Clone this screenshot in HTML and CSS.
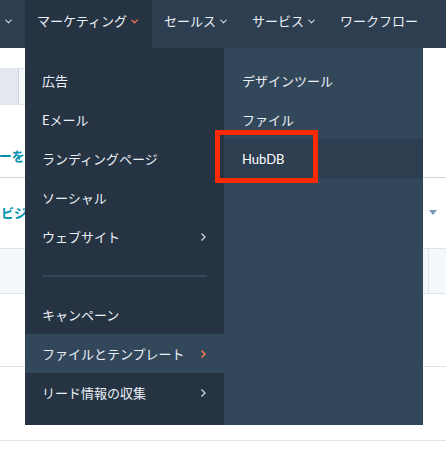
FILE: index.html
```html
<!DOCTYPE html>
<html lang="ja">
<head>
    <meta charset="UTF-8">
    <meta name="viewport" content="width=device-width, initial-scale=1.0">
    <title>マーケティング メニュー</title>
    <link rel="stylesheet" href="styles.css">
</head>
<body>
    <header class="topnav">
        <div class="nav-item nav-stub">
            <svg class="chev-down" viewBox="0 0 8 5"><polyline points="0.5,0.5 4,4 7.5,0.5"/></svg>
        </div>
        <div class="nav-item active">
            マーケティング
            <svg class="chev-down accent" viewBox="0 0 8 5"><polyline points="0.5,0.5 4,4 7.5,0.5"/></svg>
        </div>
        <div class="nav-item">
            セールス
            <svg class="chev-down" viewBox="0 0 8 5"><polyline points="0.5,0.5 4,4 7.5,0.5"/></svg>
        </div>
        <div class="nav-item">
            サービス
            <svg class="chev-down" viewBox="0 0 8 5"><polyline points="0.5,0.5 4,4 7.5,0.5"/></svg>
        </div>
        <div class="nav-item">ワークフロー</div>
    </header>

    <main class="page">
        <div class="tabbar">
            <div class="tab tab-selected"></div>
            <div class="tab"></div>
        </div>
        <div class="row row-filter">
            <span class="link link-filter">フィルターを追加</span>
        </div>
        <div class="row row-views">
            <span class="link link-views">ビジネスユニット</span>
            <span class="caret"></span>
        </div>
        <div class="row row-head">
            <div class="head-cell"></div>
        </div>
        <div class="row row-data"></div>
        <div class="row row-data"></div>
    </main>

    <nav class="dropdown">
        <ul class="menu menu-main">
            <li class="menu-item">広告</li>
            <li class="menu-item">Eメール</li>
            <li class="menu-item">ランディングページ</li>
            <li class="menu-item">ソーシャル</li>
            <li class="menu-item has-sub">ウェブサイト
                <svg class="chev-right" viewBox="0 0 5 8"><polyline points="0.5,0.5 4,4 0.5,7.5"/></svg>
            </li>
            <li class="menu-divider"><span></span></li>
            <li class="menu-item">キャンペーン</li>
            <li class="menu-item has-sub open">ファイルとテンプレート
                <svg class="chev-right accent" viewBox="0 0 5 8"><polyline points="0.5,0.5 4,4 0.5,7.5"/></svg>
            </li>
            <li class="menu-item has-sub">リード情報の収集
                <svg class="chev-right" viewBox="0 0 5 8"><polyline points="0.5,0.5 4,4 0.5,7.5"/></svg>
            </li>
        </ul>
        <ul class="menu menu-sub">
            <li class="menu-item">デザインツール</li>
            <li class="menu-item">ファイル</li>
            <li class="menu-item hover">HubDB</li>
        </ul>
    </nav>

    <div class="callout"></div>
</body>
</html>
```

FILE: styles.css
```css
:root {
    --nav-bg: #2d3e50;
    --menu-dark: #253342;
    --menu-light: #33475b;
    --menu-text: #eaf0f6;
    --accent: #e5714f;
    --teal: #0091ae;
    --line: #dfe3eb;
    --line-blue: #cbd6e2;
    --gray-light: #f5f8fa;
}

* {
    margin: 0;
    padding: 0;
    box-sizing: border-box;
    font-family: "Lato", "Noto Sans CJK JP", sans-serif;
}

body {
    width: 446px;
    height: 450px;
    overflow: hidden;
    background-color: white;
    position: relative;
}

/* top navigation */
.topnav {
    height: 48px;
    background-color: var(--nav-bg);
    display: flex;
    align-items: flex-start;
}

.nav-item {
    height: 48px;
    padding: 11px 13px 0 12px;
    display: flex;
    align-items: flex-start;
    gap: 4px;
    font-size: 13px;
    line-height: 20px;
    color: var(--menu-text);
    white-space: nowrap;
}

.nav-stub {
    width: 25px;
    padding: 11px 0 0 5px;
}

.nav-item.active {
    width: 127px;
    background-color: var(--menu-dark);
}

.chev-down {
    width: 7px;
    height: 5px;
    margin-top: 8px;
    fill: none;
    stroke: var(--menu-text);
    stroke-width: 1.2;
}

.chev-down.accent {
    stroke: var(--accent);
    stroke-width: 1.5;
}

/* page behind the menu */
.page {
    padding-top: 20px;
}

.tabbar {
    width: 300px;
    height: 37px;
    display: flex;
    border-top: 1px solid var(--line);
    border-bottom: 1px solid var(--line);
}

.tab {
    flex: 1;
    background-color: var(--gray-light);
}

.tab-selected {
    flex: 0 0 19px;
    background-color: #e5e9ef;
    border-right: 1px solid var(--line-blue);
}

.row {
    display: flex;
    align-items: center;
    border-bottom: 1px solid var(--line);
}

.row-filter {
    height: 73px;
    align-items: flex-end;
    padding-bottom: 12px;
    border-bottom-color: var(--line-blue);
}

.link {
    color: var(--teal);
    font-size: 13px;
    font-weight: 700;
    white-space: nowrap;
}

.link-filter {
    margin-left: -53px;
}

.row-views {
    height: 70px;
    justify-content: space-between;
    padding-bottom: 2px;
    border-bottom: none;
}

.link-views {
    margin-left: 1px;
}

.caret {
    width: 0;
    height: 0;
    margin-right: 9px;
    border-left: 4.5px solid transparent;
    border-right: 4.5px solid transparent;
    border-top: 5px solid #7c98b6;
}

.row-head {
    height: 46px;
    background-color: var(--gray-light);
    border-top: 1px solid var(--line);
    justify-content: flex-end;
    align-items: stretch;
}

.head-cell {
    width: 18px;
    border-left: 1px solid var(--line);
}

.row-data {
    height: 73px;
}

.row-data + .row-data {
    height: 74px;
}

/* dropdown menu */
.dropdown {
    position: absolute;
    top: 48px;
    left: 25px;
    display: flex;
    height: 377px;
}

.menu {
    list-style: none;
    width: 199px;
    padding: 13px 0;
}

.menu-main {
    background-color: var(--menu-dark);
}

.menu-sub {
    background-color: var(--menu-light);
}

.menu-item {
    height: 39px;
    padding: 0 18px 0 17px;
    display: flex;
    align-items: center;
    justify-content: space-between;
    font-size: 13px;
    color: var(--menu-text);
    white-space: nowrap;
}

.menu-sub .menu-item {
    padding-left: 18px;
}

.menu-item.open {
    background-color: var(--menu-light);
}

.menu-item.hover {
    background-color: var(--nav-bg);
    color: white;
}

.chev-right {
    width: 5px;
    height: 8px;
    fill: none;
    stroke: #cbd6e2;
    stroke-width: 1.3;
}

.chev-right.accent {
    stroke: var(--accent);
    stroke-width: 1.6;
}

.menu-divider {
    height: 39px;
    padding: 0 17px;
    display: flex;
    align-items: center;
}

.menu-divider span {
    display: block;
    width: 100%;
    height: 2px;
    background-color: var(--menu-light);
}

/* annotation box */
.callout {
    position: absolute;
    top: 130px;
    left: 215px;
    width: 103px;
    height: 53px;
    border: 5px solid #fb2a06;
}
```
